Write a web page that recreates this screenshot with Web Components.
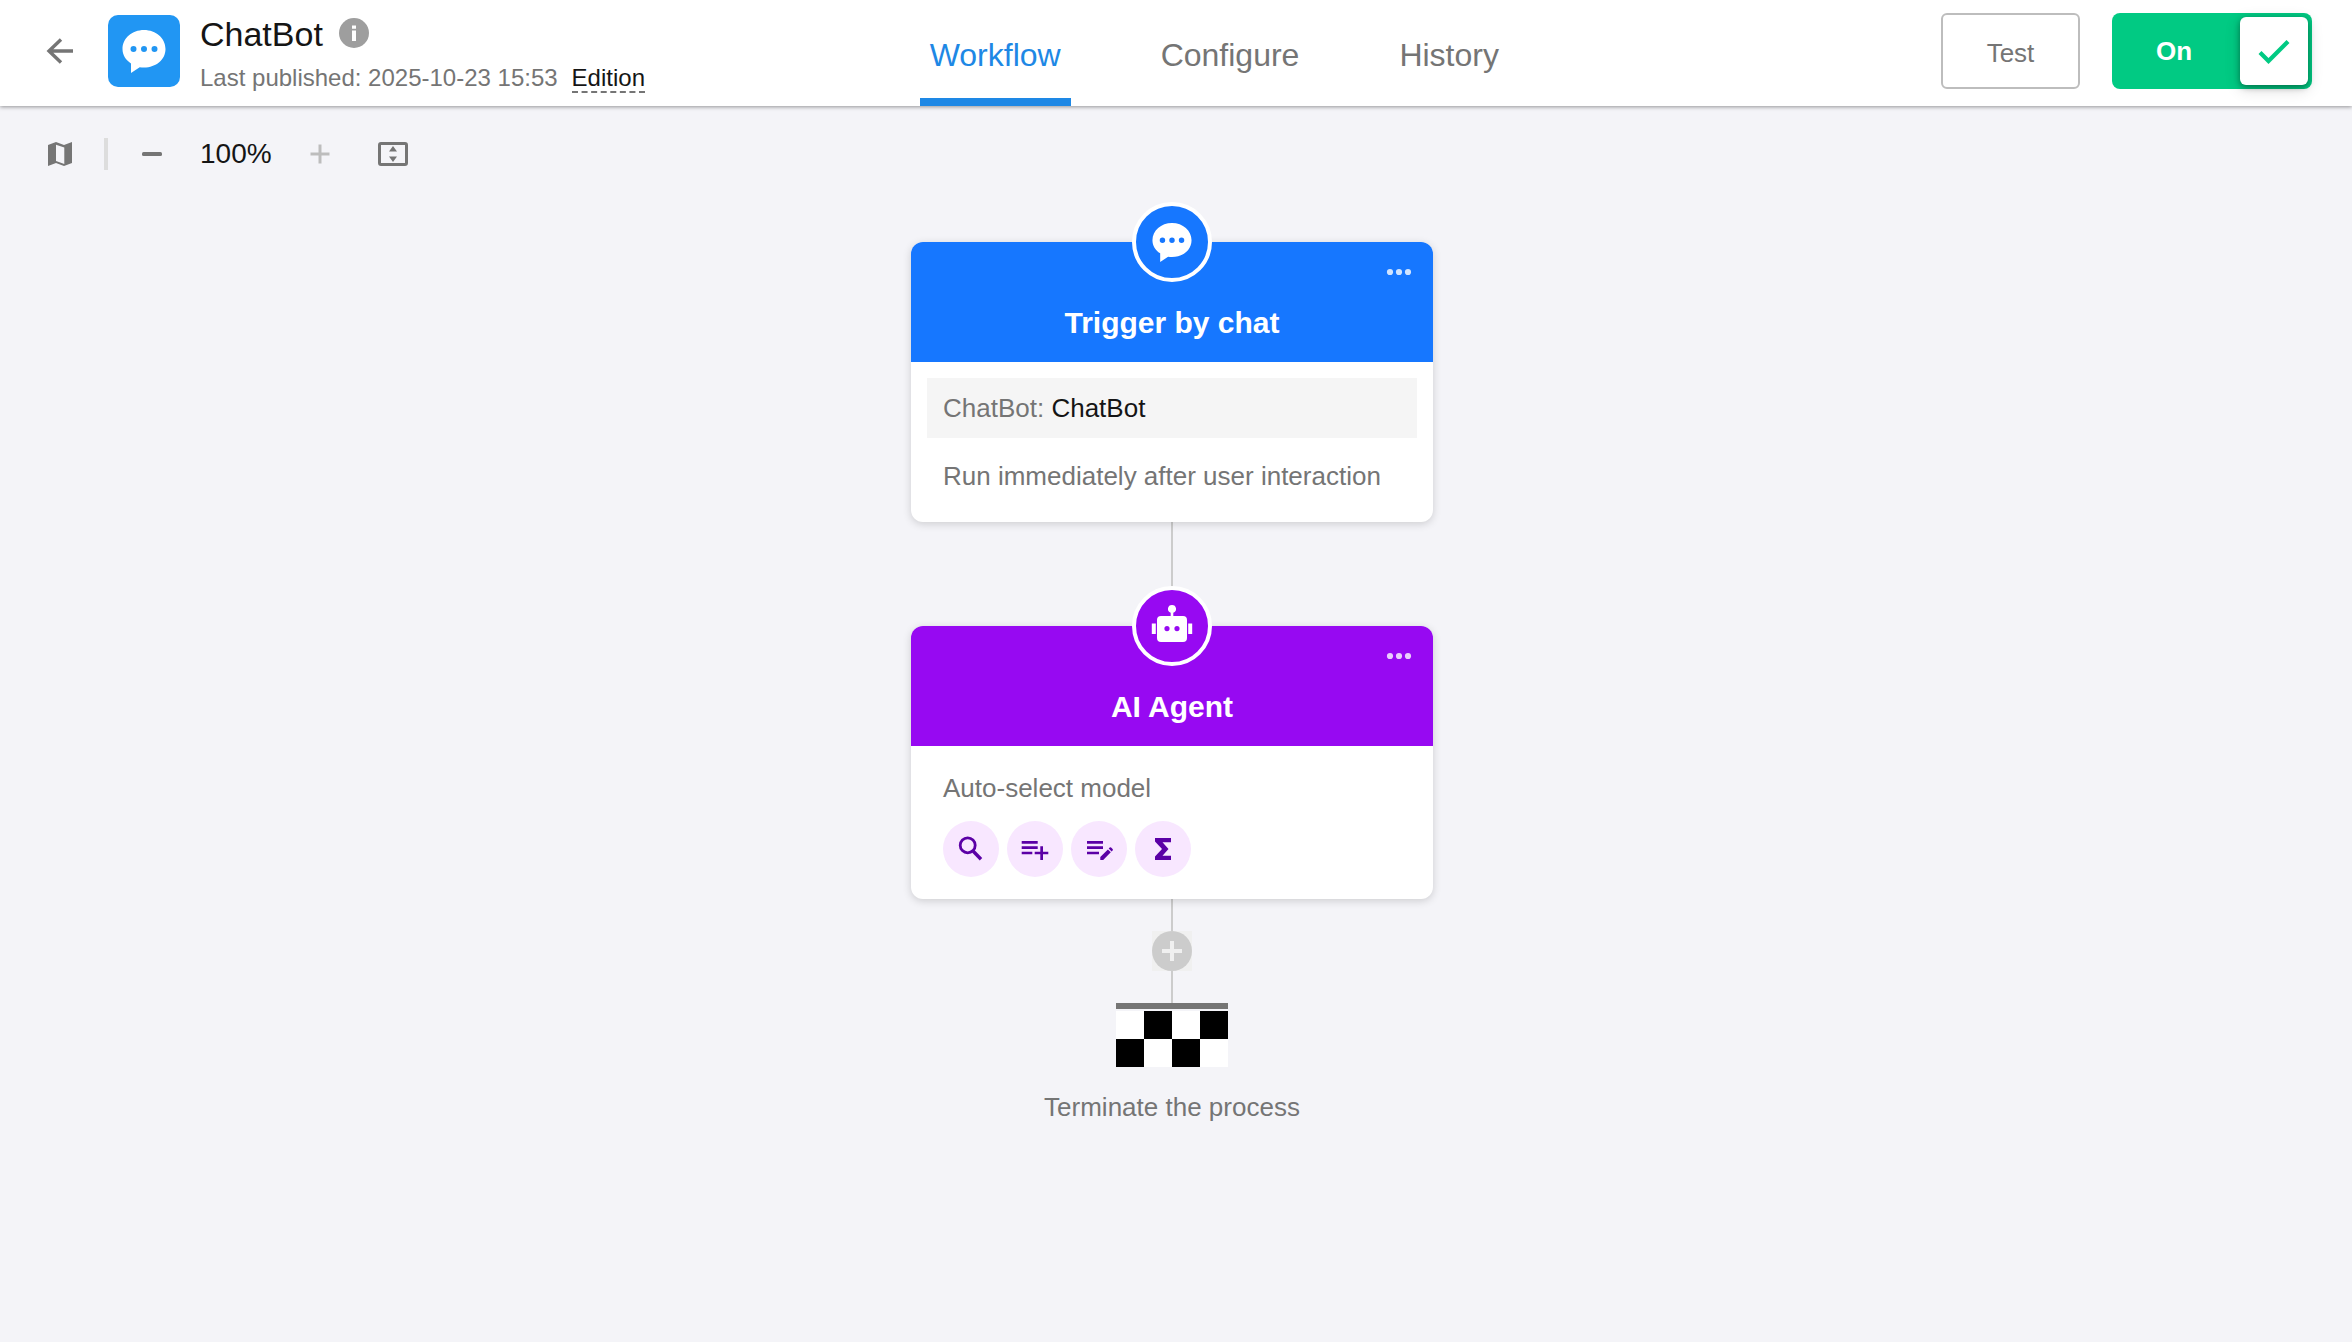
<!DOCTYPE html>
<html lang="en">
<head>
<meta charset="utf-8">
<meta name="viewport" content="width=device-width, initial-scale=1">
<title>ChatBot</title>
<style>
    :root {
        --text-color: #151515;
        --muted-color: #757575;
        --primary-color: #1e88e5;
        --success-color: #01ca83;
        --line-color: #ccc;
    }
    body {
        margin: 0;
        min-height: 100vh;
        background: #f4f4f8;
        color: var(--text-color);
        font-family: "Liberation Sans", Arial, sans-serif;
        font-size: 26px;
    }
</style>
</head>
<body>
<workflow-header name="ChatBot" published="2025-10-23 15:53">
    <workflow-tab href="#workflow" active>Workflow</workflow-tab>
    <workflow-tab href="#configure">Configure</workflow-tab>
    <workflow-tab href="#history">History</workflow-tab>
    <publish-switch slot="actions"></publish-switch>
</workflow-header>
<zoom-toolbar value="100%"></zoom-toolbar>
<workflow-canvas>
    <flow-node icon="chat" heading="Trigger by chat" color="#1677ff">
        <node-field label="ChatBot">ChatBot</node-field>
        <node-text>Run immediately after user interaction</node-text>
    </flow-node>
    <flow-line size="long"></flow-line>
    <flow-node icon="robot" heading="AI Agent" color="#9709f2">
        <agent-tools model="Auto-select model"></agent-tools>
    </flow-node>
    <flow-line></flow-line>
    <add-node></add-node>
    <flow-line></flow-line>
    <flow-end>Terminate the process</flow-end>
</workflow-canvas>

<script>
// [width, height, markup]
const icons = {
    back: [28, 28, '<path d="M15 2.500 3 14l12 11.500M3 14h24" fill="none" stroke="currentColor" stroke-width="3.400"/>'],
    chat: [44, 44, '<path fill-rule="evenodd" d="M22 1C34 1 43.500 9.300 43.500 20S34 38.500 22 38.500c-1.500 0-3 0-4.300-.3L9 44V34.500C3.700 31 .5 26 .5 20 .5 9.300 10 1 22 1ZM11.500 17a3 3 0 1 0 0 6 3 3 0 0 0 0-6Zm10.500 0a3 3 0 1 0 0 6 3 3 0 0 0 0-6Zm10.500 0a3 3 0 1 0 0 6 3 3 0 0 0 0-6Z"/>'],
    robot: [40, 40, '<path transform="translate(-1 -5)" fill-rule="evenodd" d="M21 4a4 4 0 0 1 1.300 7.800V15H32a4 4 0 0 1 4 4v18a4 4 0 0 1-4 4H10a4 4 0 0 1-4-4V19a4 4 0 0 1 4-4h9.700v-3.200A4 4 0 0 1 21 4Zm-5 21a2.600 2.600 0 1 0 0 5.200 2.600 2.600 0 0 0 0-5.200Zm10 0a2.600 2.600 0 1 0 0 5.200 2.600 2.600 0 0 0 0-5.200ZM.8 22.500h4v10.500h-4ZM37.200 22.500h4v10.500h-4Z"/>'],
    info: [30, 30, '<circle cx="15" cy="15" r="15" fill="#9e9e9e"/><path d="M13 7.500h4v3.300h-4zM13 12.500h4V23h-4z" fill="#fff"/>'],
    map: [24, 24, '<path fill-rule="evenodd" d="M0 3 8 0l8 3 8-3v21l-8 3-8-3-8 3ZM8 2.800V19l8.300 3V5.500Z"/>'],
    minus: [24, 24, '<rect x="2" y="10" width="20" height="4" rx="1.500"/>'],
    plus: [24, 24, '<path d="M12 2.500v19M2.500 12h19" stroke="currentColor" stroke-width="3"/>'],
    fit: [30, 24, '<rect x="1.500" y="1.500" width="27" height="21" rx="1.500" fill="none" stroke="currentColor" stroke-width="3"/><path d="M15 4l4 5.500h-8zM15 20l4-5.500h-8z"/>'],
    check: [34, 28, '<path d="M3 15.500 11.500 24 31 4.500" fill="none" stroke="currentColor" stroke-width="4.200"/>'],
    more: [24, 8, '<circle cx="3" cy="4" r="3.100"/><circle cx="12" cy="4" r="3.100"/><circle cx="21" cy="4" r="3.100"/>'],
    search: [56, 56, '<circle cx="24.700" cy="24.300" r="7.500" fill="none" stroke="currentColor" stroke-width="2.800"/><path d="M29.800 29.800l8.200 8.500" stroke="currentColor" stroke-width="3.400"/>'],
    listAdd: [56, 56, '<path d="M14.700 20h16v2.700h-16zM14.700 25.300h16V28h-16zM14.700 30.700h10.600v2.600H14.700zM27.700 30.700h5.600v-5.400H36v5.400h5.300v2.600H36V39h-2.700v-5.700h-5.600z"/>'],
    listEdit: [56, 56, '<path d="M16 20h16v2.700H16zM16 25.300h16V28H16zM16 30.700h12v2.600H16zM29.300 36l7.600-7.600 2.900 2.900L32.200 39h-2.900zM37.700 27.600l1-1a1 1 0 0 1 1.400 0l1.500 1.500a1 1 0 0 1 0 1.400l-1 1z"/>'],
    sigma: [56, 56, '<path d="M20 17h16v4.300h-8.500L33.500 28l-6 6.700H36V39H20v-3.500L27 28l-7-7.500z"/>']
};

function icon(name, width) {
    const [w, h, markup] = icons[name];
    const size = width || w;
    return `<svg width="${size}" height="${Math.round(size * h / w)}" viewBox="0 0 ${w} ${h}" fill="currentColor" aria-hidden="true">${markup}</svg>`;
}

const baseStyle = `
    * { box-sizing: border-box; }
    :host { display: block; }
    svg { display: block; flex: none; overflow: visible; }
    button {
        margin: 0;
        padding: 0;
        border: 0;
        background: none;
        color: inherit;
        font: inherit;
        cursor: pointer;
    }
`;

class BaseElement extends HTMLElement {
    constructor() {
        super();
        this.attachShadow({ mode: 'open' });
    }

    connectedCallback() {
        this.shadowRoot.innerHTML = `<style>${baseStyle}</style>${this.render()}`;
    }
}

class WorkflowHeader extends BaseElement {
    render() {
        return `
            <style>
                header {
                    display: grid;
                    grid-template-columns: 12fr auto 11fr;
                    height: 106px;
                    background: #fff;
                    box-shadow: 0 1px 4px rgba(0, 0, 0, 0.4);
                    position: relative;
                }
                .app, .actions {
                    display: flex;
                    align-items: center;
                    padding-bottom: 4px;
                }
                .app { padding-left: 46px; white-space: nowrap; }
                .back { margin-right: 34px; color: var(--muted-color); }
                .logo {
                    display: grid;
                    place-items: center;
                    width: 72px;
                    height: 72px;
                    margin-right: 20px;
                    border-radius: 10px;
                    background: #2196f3;
                    color: #fff;
                }
                .info { display: grid; gap: 8px; padding-top: 6px; }
                .name { display: flex; align-items: center; gap: 16px; height: 40px; }
                h1 { margin: 0; font-size: 34px; font-weight: 400; line-height: 40px; }
                .name svg { margin-bottom: 2px; }
                .published {
                    display: flex;
                    gap: 14px;
                    font-size: 24px;
                    line-height: 32px;
                    color: var(--muted-color);
                }
                .published a {
                    color: var(--text-color);
                    text-decoration: none;
                }
                .published a span { border-bottom: 2px dashed var(--muted-color); }
                nav { display: flex; gap: 80px; }
                .actions { justify-content: flex-end; gap: 32px; padding-right: 40px; }
                .test {
                    width: 139px;
                    height: 76px;
                    padding-top: 4px;
                    border: 2px solid #bdbdbd;
                    border-radius: 6px;
                    color: var(--muted-color);
                }
            </style>
            <header>
                <div class="app">
                    <button class="back" aria-label="Back">${icon('back')}</button>
                    <div class="logo">${icon('chat')}</div>
                    <div class="info">
                        <div class="name">
                            <h1>${this.getAttribute('name')}</h1>
                            <button aria-label="Information">${icon('info')}</button>
                        </div>
                        <div class="published">
                            <span>Last published: ${this.getAttribute('published')}</span>
                            <a href="#edition"><span>Edition</span></a>
                        </div>
                    </div>
                </div>
                <nav><slot></slot></nav>
                <div class="actions">
                    <button class="test">Test</button>
                    <slot name="actions"></slot>
                </div>
            </header>
        `;
    }
}

class WorkflowTab extends BaseElement {
    render() {
        return `
            <style>
                a {
                    display: flex;
                    align-items: center;
                    height: 106px;
                    padding: 12px 10px 0;
                    border-bottom: 8px solid transparent;
                    color: var(--muted-color);
                    font-size: 32px;
                    text-decoration: none;
                }
                :host([active]) a {
                    border-color: var(--primary-color);
                    color: var(--primary-color);
                }
            </style>
            <a href="${this.getAttribute('href')}"><slot></slot></a>
        `;
    }
}

class PublishSwitch extends BaseElement {
    render() {
        return `
            <style>
                label {
                    display: flex;
                    align-items: center;
                    width: 200px;
                    height: 76px;
                    padding-right: 4px;
                    border-radius: 8px;
                    background: var(--success-color);
                    color: #fff;
                    font-weight: 700;
                    cursor: pointer;
                }
                .text { flex: 1; padding-right: 4px; text-align: center; }
                .knob {
                    display: grid;
                    place-items: center;
                    width: 68px;
                    height: 68px;
                    border-radius: 6px;
                    background: #fff;
                    color: var(--success-color);
                    box-shadow: 0 2px 6px rgba(0, 0, 0, 0.36), 0 4px 16px rgba(0, 0, 0, 0.16);
                }
                input, svg { grid-area: 1 / 1; }
                input {
                    appearance: none;
                    width: 68px;
                    height: 68px;
                    margin: 0;
                    cursor: pointer;
                }
            </style>
            <label for="enabled">
                <span class="text">On</span>
                <span class="knob"><input id="enabled" type="checkbox" checked>${icon('check')}</span>
            </label>
        `;
    }
}

class ZoomToolbar extends BaseElement {
    render() {
        return `
            <style>
                div {
                    display: flex;
                    align-items: center;
                    gap: 32px;
                    height: 96px;
                    padding-left: 48px;
                    color: var(--muted-color);
                }
                hr { width: 4px; height: 32px; margin: 0; border: 0; background: #ddd; }
                output {
                    min-width: 80px;
                    padding-left: 4px;
                    color: var(--text-color);
                    font-size: 28px;
                }
                button:disabled { color: #bdbdbd; }
                .fit { margin-left: 14px; }
            </style>
            <div>
                <button aria-label="Map">${icon('map')}</button>
                <hr>
                <button aria-label="Zoom out">${icon('minus')}</button>
                <output>${this.getAttribute('value')}</output>
                <button aria-label="Zoom in" disabled>${icon('plus')}</button>
                <button class="fit" aria-label="Fit to screen">${icon('fit')}</button>
            </div>
        `;
    }
}

class WorkflowCanvas extends BaseElement {
    render() {
        return `
            <style>
                main {
                    display: flex;
                    flex-direction: column;
                    align-items: center;
                    padding: 40px 8px 40px 0;
                }
            </style>
            <main><slot></slot></main>
        `;
    }
}

class FlowNode extends BaseElement {
    render() {
        return `
            <style>
                :host { width: 522px; position: relative; }
                article {
                    overflow: hidden;
                    border-radius: 12px;
                    background: #fff;
                    box-shadow: 0 2px 8px rgba(0, 0, 0, 0.16);
                }
                header {
                    display: flex;
                    align-items: flex-end;
                    justify-content: center;
                    height: 120px;
                    padding-bottom: 19px;
                    background: ${this.getAttribute('color')};
                    color: #fff;
                }
                h2 { margin: 0; font-size: 30px; line-height: 40px; }
                /* sits half outside the card */
                .badge {
                    position: absolute;
                    top: -40px;
                    left: calc(50% - 40px);
                    display: grid;
                    place-items: center;
                    width: 80px;
                    height: 80px;
                    border: 4px solid #fff;
                    border-radius: 50%;
                    background: ${this.getAttribute('color')};
                    color: #fff;
                }
                .more {
                    position: absolute;
                    top: 26px;
                    right: 22px;
                    color: rgba(255, 255, 255, 0.8);
                }
            </style>
            <article>
                <header><h2>${this.getAttribute('heading')}</h2></header>
                <slot></slot>
            </article>
            <div class="badge">${icon(this.getAttribute('icon'), 40)}</div>
            <button class="more" aria-label="More">${icon('more')}</button>
        `;
    }
}

class NodeField extends BaseElement {
    render() {
        return `
            <style>
                p {
                    margin: 16px 16px 8px;
                    padding: 0 16px;
                    background: #f5f5f5;
                    line-height: 60px;
                }
                span { color: var(--muted-color); }
            </style>
            <p><span>${this.getAttribute('label')}:</span> <slot></slot></p>
        `;
    }
}

class NodeText extends BaseElement {
    render() {
        return `
            <style>
                p {
                    margin: 0;
                    padding: 0 32px 16px;
                    color: var(--muted-color);
                    line-height: 60px;
                }
            </style>
            <p><slot></slot></p>
        `;
    }
}

class AgentTools extends BaseElement {
    render() {
        return `
            <style>
                :host { padding: 26px 32px 22px; }
                p { margin: 0 0 17px; color: var(--muted-color); line-height: 32px; }
                div { display: flex; gap: 8px; }
                button { border-radius: 50%; background: #f8e7ff; color: #5b00a6; }
            </style>
            <p>${this.getAttribute('model')}</p>
            <div>
                <button aria-label="Search records">${icon('search')}</button>
                <button aria-label="Add records">${icon('listAdd')}</button>
                <button aria-label="Edit records">${icon('listEdit')}</button>
                <button aria-label="Summarize">${icon('sigma')}</button>
            </div>
        `;
    }
}

class FlowLine extends BaseElement {
    render() {
        return `
            <style>
                :host { width: 2px; height: 32px; background: var(--line-color); }
                :host([size="long"]) { height: 104px; }
            </style>
        `;
    }
}

class AddNode extends BaseElement {
    render() {
        return `
            <style>
                button { display: block; background: #f0f0f0; }
            </style>
            <button aria-label="Add node">
                <svg width="40" height="40" viewBox="0 0 40 40">
                    <circle cx="20" cy="20" r="20" fill="#ccc"/>
                    <path d="M20 10v20M10 20h20" stroke="#f0f0f0" stroke-width="4"/>
                </svg>
            </button>
        `;
    }
}

class FlowEnd extends BaseElement {
    render() {
        return `
            <style>
                :host {
                    display: flex;
                    flex-direction: column;
                    align-items: center;
                    color: var(--muted-color);
                }
                .flag { margin-bottom: 24px; }
                .bar { width: 112px; height: 6px; margin-bottom: 2px; background: var(--muted-color); }
                span { line-height: 32px; }
            </style>
            <div class="bar"></div>
            <svg class="flag" width="112" height="56" viewBox="0 0 4 2" shape-rendering="crispEdges" aria-hidden="true">
                <path d="M0 0h4v2H0z" fill="#fff"/>
                <path d="M1 0h1v1H1zM3 0h1v1H3zM0 1h1v1H0zM2 1h1v1H2z"/>
            </svg>
            <span><slot></slot></span>
        `;
    }
}

customElements.define('workflow-header', WorkflowHeader);
customElements.define('workflow-tab', WorkflowTab);
customElements.define('publish-switch', PublishSwitch);
customElements.define('zoom-toolbar', ZoomToolbar);
customElements.define('workflow-canvas', WorkflowCanvas);
customElements.define('flow-node', FlowNode);
customElements.define('node-field', NodeField);
customElements.define('node-text', NodeText);
customElements.define('agent-tools', AgentTools);
customElements.define('flow-line', FlowLine);
customElements.define('add-node', AddNode);
customElements.define('flow-end', FlowEnd);
</script>
</body>
</html>
